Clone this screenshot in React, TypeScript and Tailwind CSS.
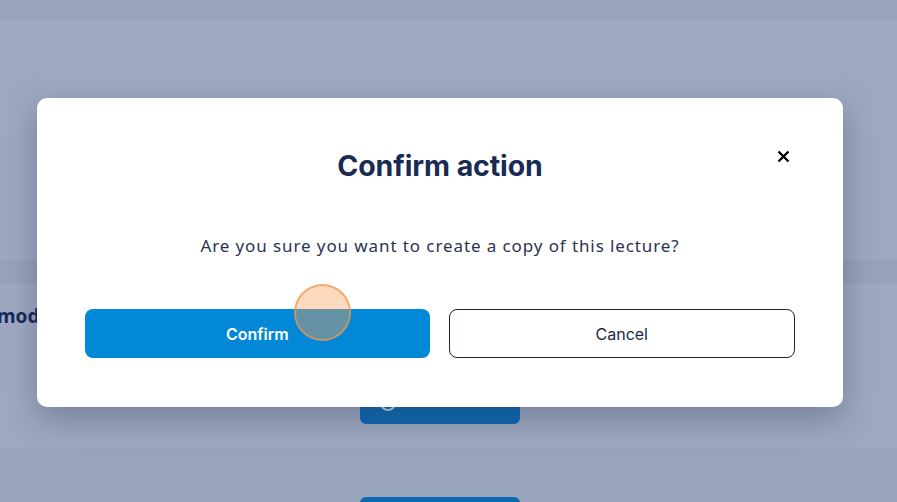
import React from 'react';

const BackgroundPage: React.FC = () => {
  return (
    <div className="flex flex-col h-[502px] overflow-hidden bg-[#9ea9c1]">
      <div className="h-[20px] bg-[#98a4bc]" />
      <div className="h-[67px] bg-[#9ea9c1]" />
      <div className="h-[173px] bg-[#9ea8c1]" />
      <div className="h-[23px] bg-[#97a2bb]" />
      <div className="h-[166px] bg-[#9ea9c1] flex flex-col">
        <div className="h-[67px] flex items-center">
          <span className="text-[19px] font-bold text-[#16295a] -ml-[3px] [font-family:'Noto_Sans',sans-serif]">
            modules
          </span>
        </div>
        <div className="flex pl-[360px] pt-[30px]">
          <div className="w-[160px] h-[44px] rounded-[6px] bg-[#0b69b1] pl-[20px] pt-[15px]">
            <div className="w-[16px] h-[16px] rounded-full border-2 border-[#c9d3e3]" />
          </div>
        </div>
      </div>
      <div className="h-[53px] bg-[#98a4bc] flex pl-[360px] pt-[48px]">
        <div className="w-[160px] h-[30px] rounded-[6px] bg-[#0b69b1]" />
      </div>
    </div>
  );
};

const ConfirmModal: React.FC = () => {
  return (
    <div className="absolute left-[37px] top-[98px] w-[806px] h-[309px] bg-white rounded-[10px] shadow-[0_12px_32px_rgba(40,50,80,0.35)] flex flex-col items-center pt-[51px] px-[48px]">
      <button className="absolute right-[52px] top-[50px] w-[16px] h-[16px] flex items-center justify-center">
        <svg width="13" height="13" viewBox="0 0 13 13" fill="none">
          <path d="M1.5 1.5L11.5 11.5M11.5 1.5L1.5 11.5" stroke="#000" strokeWidth="2.4" strokeLinecap="butt" />
        </svg>
      </button>
      <h2 className="text-[28.5px] leading-[34px] font-bold text-[#1a2b53] [font-family:Inter,sans-serif] tracking-[-0.1px]">
        Confirm action
      </h2>
      <p className="mt-[51px] text-[17px] leading-[24px] text-[#2a3452] [font-family:'Noto_Sans',sans-serif] tracking-[0.9px]">
        Are you sure you want to create a copy of this lecture?
      </p>
      <div className="mt-[51px] flex w-full gap-[19px]">
        <button className="flex-1 h-[49px] rounded-[8px] bg-[#0288d7] text-white text-[16px] font-semibold [font-family:Inter,sans-serif]">
          Confirm
        </button>
        <button className="flex-1 h-[49px] rounded-[8px] border border-[#1b2436] bg-white text-[#1b2a44] text-[16px] [font-family:Inter,sans-serif]">
          Cancel
        </button>
      </div>
      <div className="absolute left-[257px] top-[186px] w-[57px] h-[57px] rounded-full bg-[rgba(250,160,90,0.4)] border-2 border-[rgba(235,150,80,0.7)]" />
    </div>
  );
};

export default function App() {
  return (
    <div className="relative w-[897px] h-[502px] overflow-hidden">
      <BackgroundPage />
      <ConfirmModal />
    </div>
  );
}
